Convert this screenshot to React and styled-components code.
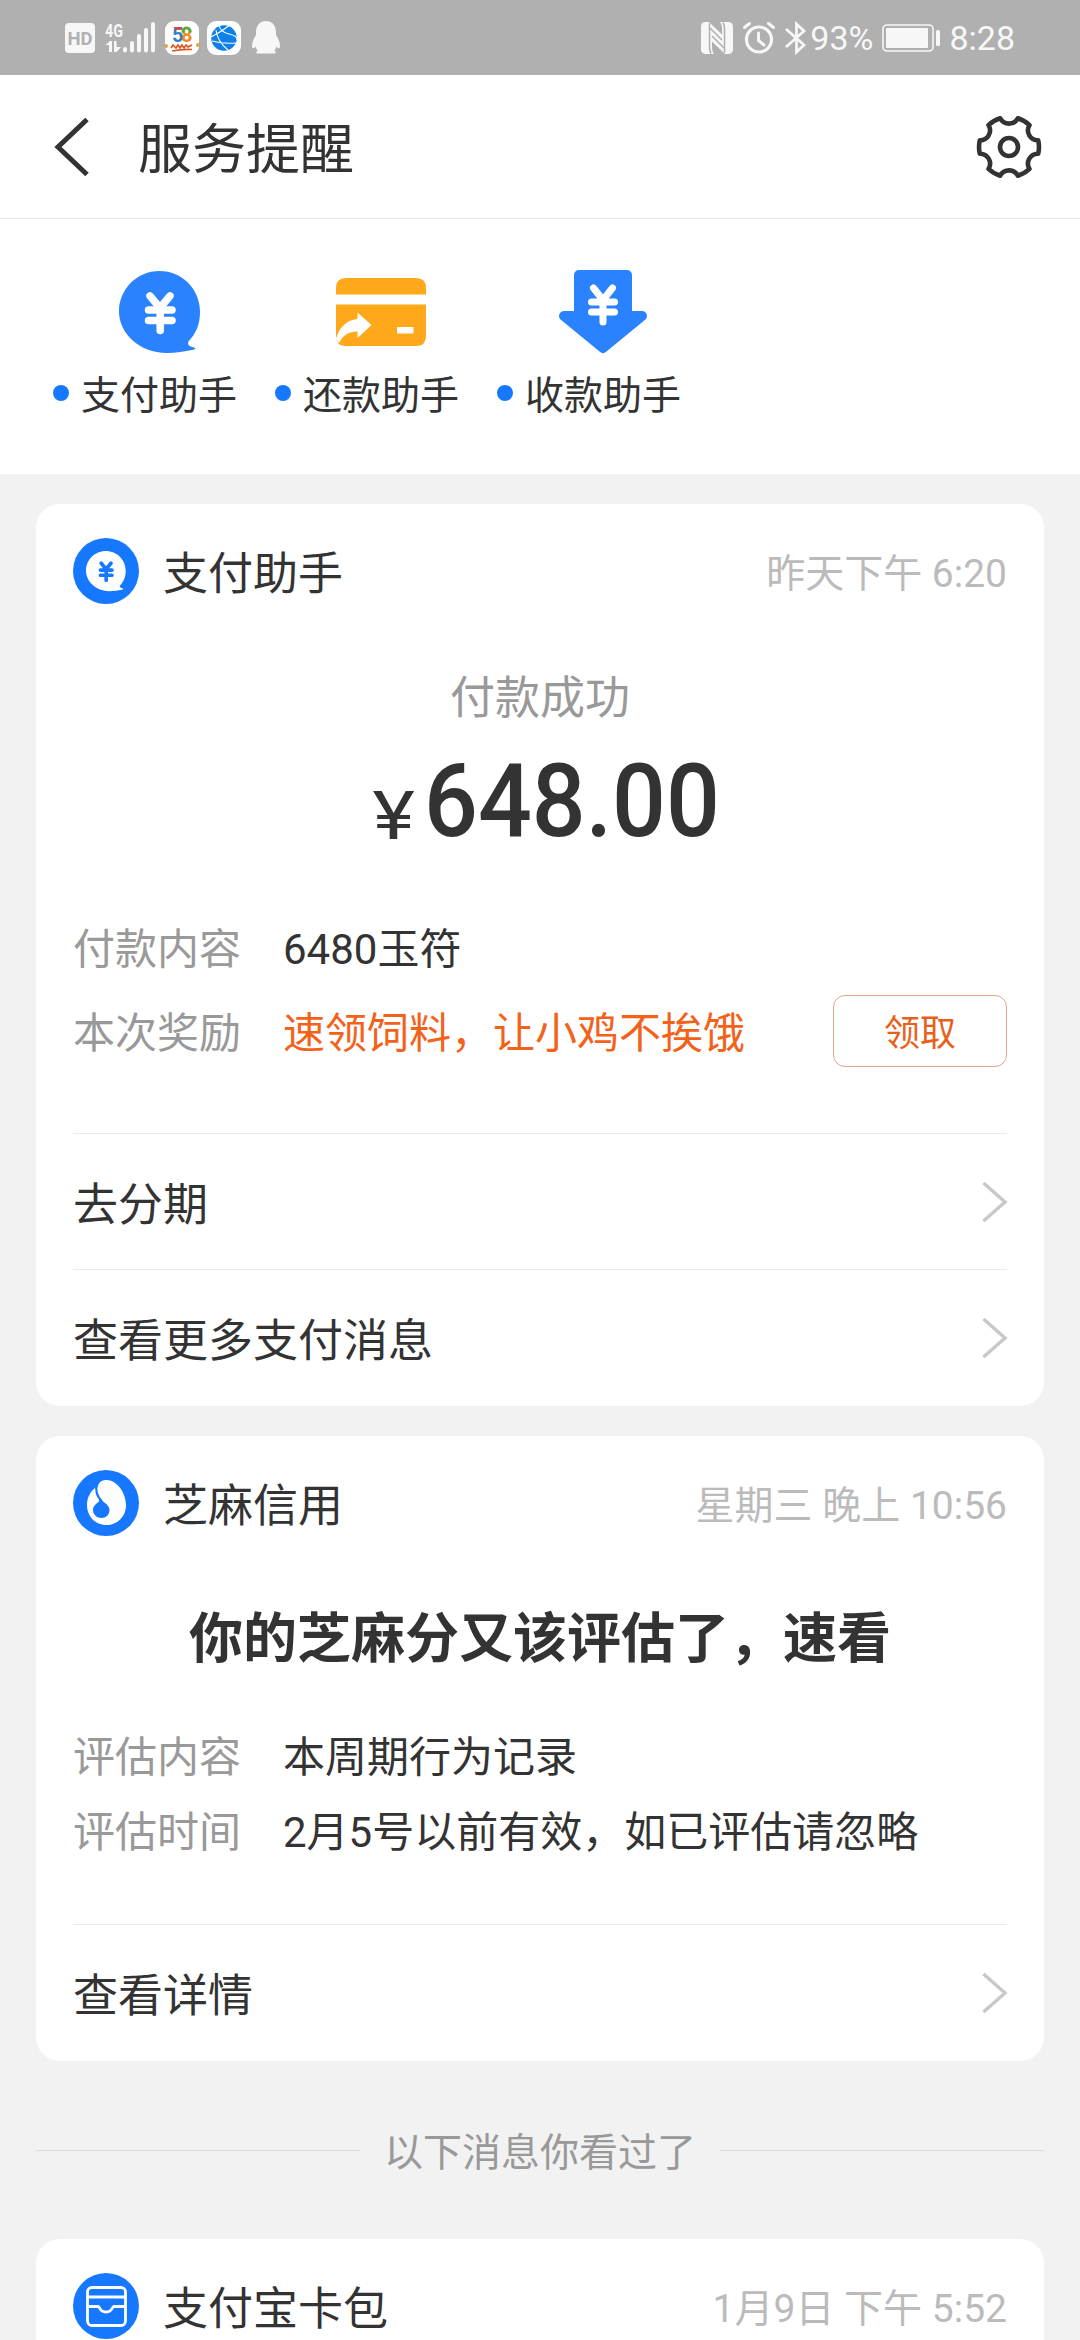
import React from 'react';
import styled, { createGlobalStyle } from 'styled-components';

const GlobalStyle = createGlobalStyle`
    * {
        box-sizing: border-box;
    }

    body {
        margin: 0;
        background: #f2f2f2;
        color: #333333;
        font-family: Roboto, "Noto Sans CJK SC", sans-serif;
    }

    svg {
        display: block;
        flex: none;
        overflow: visible;
    }
`;

const Screen = styled.div`
    width: 1080px;
    height: 2340px;
    overflow: hidden;
    background: #f2f2f2;
`;

const StatusBar = styled.div`
    display: flex;
    justify-content: space-between;
    align-items: center;
    height: 75px;
    padding: 0 65px;
    background: #b0b0b0;
    color: #f7f7f7;
`;

const StatusGroup = styled.div`
    display: flex;
    align-items: center;
`;

const StatusText = styled.span`
    padding-top: 1px;
    font-size: 34px;
    line-height: 40px;
    margin-left: ${props => props.$left};
`;

const NavBar = styled.header`
    display: flex;
    align-items: center;
    height: 144px;
    padding: 0 37px 0 53px;
    background: #ffffff;
    border-bottom: 1px solid #e8e8e8;
`;

const NavTitle = styled.h1`
    flex: 1;
    margin: 0 0 0 47px;
    padding-top: 8px;
    font-size: 54px;
    font-weight: 400;
    line-height: 70px;
`;

const Shortcuts = styled.nav`
    display: flex;
    gap: 38px;
    height: 255px;
    padding: 50px 53px 0;
    background: #ffffff;
`;

const Shortcut = styled.div`
    display: flex;
    flex-direction: column;
    align-items: center;
    width: 184px;
`;

const ShortcutIcon = styled.div`
    display: flex;
    align-items: center;
    justify-content: center;
    width: 90px;
    height: 86px;
    margin-left: 28px;
`;

const ShortcutLabel = styled.div`
    display: flex;
    align-items: center;
    gap: 12px;
    margin-top: 13px;
    font-size: 39px;
    line-height: 56px;
    white-space: nowrap;
`;

const Dot = styled.span`
    width: 16px;
    height: 16px;
    margin-top: -7px;
    border-radius: 50%;
    background: #1677ff;
`;

const Feed = styled.main`
    padding: 30px 36px 0;
`;

const Card = styled.section`
    height: ${props => props.$height};
    margin-bottom: 30px;
    padding: 34px 37px 0;
    border-radius: 24px;
    background: #ffffff;
`;

const CardHeader = styled.div`
    display: flex;
    align-items: center;
    height: 66px;
`;

const CardTitle = styled.h2`
    flex: 1;
    margin: 0 0 0 24px;
    padding-top: 7px;
    font-size: 45px;
    font-weight: 400;
    line-height: 60px;
`;

const CardTime = styled.span`
    padding-top: 5px;
    font-size: 39px;
    line-height: 60px;
    color: #bbbbbb;
`;

const PayStatus = styled.div`
    margin-top: 62px;
    font-size: 45px;
    line-height: 66px;
    text-align: center;
    color: #999999;
`;

const Amount = styled.div`
    display: flex;
    align-items: baseline;
    justify-content: center;
    gap: 13px;
    height: 120px;
    margin-top: 9px;
    line-height: 120px;
    padding-left: 14px;
`;

const Currency = styled.span`
    font-size: 67px;
    line-height: 126px;
    transform: translateY(3px) scaleX(1.2);
`;

const Digits = styled.span`
    width: 294px;
    font-size: 102px;
    font-weight: 500;
    transform: scaleX(0.93);
    transform-origin: left;
    white-space: nowrap;
`;

const Headline = styled.h3`
    margin: 64px 0 0;
    font-size: 54px;
    font-weight: 700;
    line-height: 80px;
    text-align: center;
`;

const Details = styled.dl`
    margin: ${props => props.$top} 0 0;
    height: ${props => props.$height};
`;

const DetailRow = styled.div`
    display: flex;
    align-items: center;
    height: ${props => props.$height};
    font-size: 42px;
    line-height: 60px;
`;

const DetailLabel = styled.dt`
    width: 210px;
    padding-top: 5px;
    color: #999999;
`;

const DetailValue = styled.dd`
    flex: 1;
    margin: 0;
    padding-top: 5px;
    white-space: nowrap;
    color: ${props => (props.$highlight ? '#f3621b' : '#333333')};
`;

const ClaimButton = styled.button`
    width: 174px;
    height: 72px;
    padding: 5px 0 0;
    border: 1px solid #dda98c;
    border-radius: 12px;
    background: #ffffff;
    color: #e8601c;
    font-family: inherit;
    font-size: 36px;
    line-height: 64px;
`;

const LinkRow = styled.div`
    display: flex;
    align-items: center;
    justify-content: space-between;
    height: 136px;
    border-top: 1px solid #ebebeb;
    font-size: 45px;
`;

const SeenDivider = styled.div`
    display: flex;
    align-items: center;
    justify-content: space-between;
    height: 60px;
    margin: 59px 0;
    font-size: 39px;
    line-height: 60px;
    color: #999999;

    &::before,
    &::after {
        content: '';
        width: 324px;
        height: 1px;
        background: #dcdcdc;
    }
`;

const SeenText = styled.span`
    padding-top: 6px;
`;

const HdIcon = () => (
    <svg width="30" height="30" viewBox="0 0 30 30">
        <rect width="30" height="30" rx="4" fill="#f7f7f7" />
        <text x="15" y="21.5" textAnchor="middle" fontFamily="Roboto" fontSize="18.5" fontWeight="700" fill="#b0b0b0">HD</text>
    </svg>
);

const StatusSvg = styled.svg`
    margin-left: ${props => props.$left};
`;

const SignalIcon = () => (
    <StatusSvg $left="10px" width="52" height="34" viewBox="0 0 52 34" fill="#f7f7f7">
        <text x="0" y="15.5" fontFamily="Roboto" fontSize="18" fontWeight="700" textLength="18" lengthAdjust="spacingAndGlyphs">4G</text>
        <path d="M0.5 24 L5 20 H7 V31 H4 V24 Z M9 20 H11.5 V26 L16 26 L11.5 31 H9 Z" />
        <rect x="18" y="26" width="4" height="5.5" rx="2" />
        <rect x="25" y="20" width="4" height="11.5" rx="2" />
        <rect x="32" y="13" width="4" height="18.5" rx="2" />
        <rect x="39" y="7" width="4" height="24.5" rx="2" />
        <rect x="46" y="1" width="4" height="30.5" rx="2" />
    </StatusSvg>
);

const CityIcon = () => (
    <StatusSvg $left="7px" width="36" height="34" viewBox="0 0 36 34">
        <rect x="1" width="34" height="34" rx="9" fill="#ffffff" />
        <g fontFamily="Roboto" fontSize="20" fontWeight="700">
            <text x="8" y="20.5" fill="#2d7fd3">5</text>
            <text x="17" y="20.5" fill="#ef8b1f">8</text>
        </g>
        <path d="M10.500 7.500 H18" stroke="#e04238" strokeWidth="2.600" fill="none" />
        <path d="M19.200 11.500 A3.600 3.600 0 1 1 26 11.500" stroke="#4caf3d" strokeWidth="2.600" fill="none" />
        <circle cx="2" cy="25" r="2" fill="#e3a53c" />
        <circle cx="34" cy="24" r="2" fill="#e3a53c" />
        <path d="M7 27 L9 24 L12 27 L14 24 L16 27 L18 24 L20 27 L22 24 L24 26 L28 24 M8 30 Q18 28 28 28.500" stroke="#e2541f" strokeWidth="1.600" fill="none" />
    </StatusSvg>
);

const BrowserIcon = () => (
    <StatusSvg $left="7px" width="34" height="34" viewBox="0 0 34 34">
        <rect width="34" height="34" rx="9" fill="#ffffff" />
        <circle cx="17" cy="17" r="12.800" fill="#0f80e8" />
        <path d="M12 4 Q13 11 22 13 T30 19 M4 16 Q14 11 23 4 M9 9 Q10 20 21 29 M5 20 Q16 23 29 22" stroke="#ffffff" strokeWidth="1.100" fill="none" />
    </StatusSvg>
);

const PenguinIcon = () => (
    <StatusSvg $left="11px" width="28" height="33" viewBox="0 0 28 33">
        <path
            d="M14 0 C20 0 24 4.500 24 11 L24 14 C26 17 28 21 28 25 C28 28 26 28 24.500 25.500 C24 28 23 29 22 30 C25 31 24 32.500 22 32.500 H6 C4 32.500 3 31 6 30 C5 29 4 28 3.500 25.500 C2 28 0 28 0 25 C0 21 2 17 4 14 L4 11 C4 4.500 8 0 14 0 Z"
            fill="#f7f7f7"
        />
    </StatusSvg>
);

const NfcIcon = () => (
    <svg width="32" height="32" viewBox="0 0 32 32">
        <rect width="32" height="32" rx="4.500" fill="#f7f7f7" />
        <path d="M8 0 L21 12.500 V7 C21 3.500 20 1.500 19 0" fill="#b0b0b0" />
        <path d="M24 32 L11 19.500 V25 C11 28.500 12 30.500 13 32" fill="#b0b0b0" />
        <path d="M8.500 1 V24 C8.500 28 9 30 10 31.500 M23.500 31 V8 C23.500 4 23 2 22 0.500 M9 6 L21 18 M11 14 L23 26" stroke="#b0b0b0" strokeWidth="1.500" fill="none" />
    </svg>
);

const AlarmIcon = () => (
    <StatusSvg $left="10px" width="32" height="32" viewBox="0 0 32 32" fill="none" stroke="#f7f7f7">
        <circle cx="16" cy="17.500" r="12.500" strokeWidth="3.200" />
        <path d="M15.500 11 V18.500 L21 23" strokeWidth="3" strokeLinecap="round" />
        <path d="M1.500 5.500 L6.500 1.500 M30.500 5.500 L25.500 1.500" strokeWidth="3" strokeLinecap="round" />
    </StatusSvg>
);

const BluetoothIcon = () => (
    <StatusSvg $left="10px" width="22" height="34" viewBox="0 0 22 34">
        <path d="M1 8 L19 24 L11.500 31 V3 L19 10 L1 26" fill="none" stroke="#f7f7f7" strokeWidth="2.800" />
    </StatusSvg>
);

const BatteryIcon = () => (
    <StatusSvg $left="9px" width="59" height="28" viewBox="0 0 59 28">
        <rect x="1" y="1" width="50" height="26" rx="4" fill="none" stroke="#f7f7f7" strokeWidth="1.600" />
        <rect x="4" y="4" width="42" height="20" rx="1" fill="#f7f7f7" />
        <rect x="54" y="6" width="4" height="16" rx="1.500" fill="#f7f7f7" />
    </StatusSvg>
);

const BackIcon = () => (
    <svg width="38" height="60" viewBox="0 0 38 60">
        <path d="M34 2.500 L5 30 L34 57.500" fill="none" stroke="#333333" strokeWidth="5" />
    </svg>
);

const GearIcon = () => (
    <svg width="68" height="68" viewBox="-34 -34 68 68" fill="none" stroke="#333333">
        <path
            strokeWidth="4.600"
            strokeLinejoin="round"
            d="M29.200 6.750 A9.900 9.900 0 0 0 20.500 21.900 A30 30 0 0 1 8.800 28.700 A9.900 9.900 0 0 0 -8.800 28.700 A30 30 0 0 1 -20.500 21.900 A9.900 9.900 0 0 0 -29.200 6.750 A30 30 0 0 1 -29.200 -6.750 A9.900 9.900 0 0 0 -20.500 -21.900 A30 30 0 0 1 -8.800 -28.700 A9.900 9.900 0 0 0 8.800 -28.700 A30 30 0 0 1 20.500 -21.900 A9.900 9.900 0 0 0 29.200 -6.750 A30 30 0 0 1 29.200 6.750 Z"
        />
        <circle r="9" strokeWidth="4.600" />
    </svg>
);

const Bubble = ({ fill, mark }) => (
    <>
        <path
            d="M40.500 0 C63 0 81 18 81 40.500 C81 54 77 62 69.500 70.500 C67.500 74 72 76 75 76.500 C77 77 76.500 78.500 73 79 C66 80.500 57 82 48 82 C20 82 0 62 0 40.500 C0 18 18 0 40.500 0 Z"
            fill={fill}
        />
        <path d="M31 25 L41 37 L51 25 M29.500 39 H53 M29.500 49.500 H53 M41.200 37 V59.500" fill="none" stroke={mark} strokeWidth="7.500" strokeLinecap="round" />
    </>
);

const PayIcon = () => (
    <svg width="81" height="82" viewBox="0 0 81 82">
        <Bubble fill="#2a82ff" mark="#ffffff" />
    </svg>
);

const RepayIcon = () => (
    <svg width="90" height="68" viewBox="0 0 90 68">
        <path d="M10 0 H80 Q90 0 90 10 V16.500 H0 V10 Q0 0 10 0 Z M0 26.500 H90 V58 Q90 68 80 68 H10 Q0 68 0 58 Z" fill="#fea81a" />
        <path d="M0 61 C3 49 11 42 21.500 41 V34.500 L35.500 47 L21.500 60 V53.500 C13 53.500 7 57 3 65 Z" fill="#ffffff" />
        <rect x="61" y="49" width="16.500" height="6.500" fill="#ffffff" />
    </svg>
);

const CollectIcon = () => (
    <svg width="90" height="84" viewBox="0 0 90 84">
        <path
            d="M21 5 H69 V46 H84 L45 78 L6 46 H21 Z"
            fill="#2a82ff"
            stroke="#2a82ff"
            strokeWidth="10"
            strokeLinejoin="round"
        />
        <path d="M35.500 18 L45 30 L54.500 18 M33.500 32 H56.500 M33.500 42 H56.500 M45 30 V52" fill="none" stroke="#ffffff" strokeWidth="7" strokeLinecap="round" />
    </svg>
);

const PayAvatar = () => (
    <svg width="66" height="66" viewBox="0 0 66 66">
        <circle cx="33" cy="33" r="33" fill="#1677ff" />
        <g transform="translate(13 13) scale(0.490)">
            <Bubble fill="#ffffff" mark="#1677ff" />
        </g>
    </svg>
);

const SesameAvatar = () => (
    <svg width="66" height="66" viewBox="0 0 66 66">
        <circle cx="33" cy="33" r="33" fill="#1677ff" />
        <path d="M33.500 10 C44 10 53 23 53 35 C53 47 44 55 33.500 55 C22 55 14 46 14 35 C14 28 17 22 22 18 L25 16 C26 12 29 10 33.500 10 Z" fill="#ffffff" />
        <path d="M24 14 C22 21 23.500 26 29 31.500" fill="none" stroke="#1677ff" strokeWidth="2.200" />
        <path d="M26 28 C28 31 36.500 34 36.500 40 C36.500 44.500 33 48 28.500 48 C24 48 20 44.500 20 40 C20 36 23 34 26 31.500 Z" fill="#1677ff" />
    </svg>
);

const WalletAvatar = () => (
    <svg width="66" height="66" viewBox="0 0 66 66">
        <circle cx="33" cy="33" r="33" fill="#1677ff" />
        <g fill="none" stroke="#ffffff" strokeWidth="2.800">
            <rect x="14.500" y="14.500" width="38" height="38" rx="4.500" />
            <path d="M14.500 24 H52.500 M14.500 33.500 H25 C27 33.500 26.500 39 33 39 C39.500 39 39 33.500 41 33.500 H52.500" />
        </g>
    </svg>
);

const Chevron = () => (
    <svg width="26" height="40" viewBox="0 0 26 40">
        <path d="M2.500 1 L24 20 L2.500 39" fill="none" stroke="#c8c8c8" strokeWidth="3.400" />
    </svg>
);

const shortcuts = [
    { label: '支付助手', icon: <PayIcon /> },
    { label: '还款助手', icon: <RepayIcon /> },
    { label: '收款助手', icon: <CollectIcon /> }
];

const MessageCard = ({ icon, title, time, height, children }) => (
    <Card $height={height}>
        <CardHeader>
            {icon}
            <CardTitle>{title}</CardTitle>
            <CardTime>{time}</CardTime>
        </CardHeader>
        {children}
    </Card>
);

const App = () => {
    return (
        <Screen>
            <GlobalStyle />
            <StatusBar>
                <StatusGroup>
                    <HdIcon />
                    <SignalIcon />
                    <CityIcon />
                    <BrowserIcon />
                    <PenguinIcon />
                </StatusGroup>
                <StatusGroup>
                    <NfcIcon />
                    <AlarmIcon />
                    <BluetoothIcon />
                    <StatusText $left="3px">93%</StatusText>
                    <BatteryIcon />
                    <StatusText $left="8px">8:28</StatusText>
                </StatusGroup>
            </StatusBar>
            <NavBar>
                <BackIcon />
                <NavTitle>服务提醒</NavTitle>
                <GearIcon />
            </NavBar>
            <Shortcuts>
                {shortcuts.map(item => (
                    <Shortcut key={item.label}>
                        <ShortcutIcon>{item.icon}</ShortcutIcon>
                        <ShortcutLabel>
                            <Dot />
                            {item.label}
                        </ShortcutLabel>
                    </Shortcut>
                ))}
            </Shortcuts>
            <Feed>
                <MessageCard icon={<PayAvatar />} title="支付助手" time="昨天下午 6:20" height="902px">
                    <PayStatus>付款成功</PayStatus>
                    <Amount>
                        <Currency>¥</Currency>
                        <Digits>648.00</Digits>
                    </Amount>
                    <Details $top="44px" $height="228px">
                        <DetailRow $height="84px">
                            <DetailLabel>付款内容</DetailLabel>
                            <DetailValue>6480玉符</DetailValue>
                        </DetailRow>
                        <DetailRow $height="84px">
                            <DetailLabel>本次奖励</DetailLabel>
                            <DetailValue $highlight>速领饲料，让小鸡不挨饿</DetailValue>
                            <ClaimButton>领取</ClaimButton>
                        </DetailRow>
                    </Details>
                    <LinkRow>
                        去分期
                        <Chevron />
                    </LinkRow>
                    <LinkRow>
                        查看更多支付消息
                        <Chevron />
                    </LinkRow>
                </MessageCard>
                <MessageCard icon={<SesameAvatar />} title="芝麻信用" time="星期三 晚上 10:56" height="625px">
                    <Headline>你的芝麻分又该评估了，速看</Headline>
                    <Details $top="38px" $height="206px">
                        <DetailRow $height="75px">
                            <DetailLabel>评估内容</DetailLabel>
                            <DetailValue>本周期行为记录</DetailValue>
                        </DetailRow>
                        <DetailRow $height="75px">
                            <DetailLabel>评估时间</DetailLabel>
                            <DetailValue>2月5号以前有效，如已评估请忽略</DetailValue>
                        </DetailRow>
                    </Details>
                    <LinkRow>
                        查看详情
                        <Chevron />
                    </LinkRow>
                </MessageCard>
                <SeenDivider>
                    <SeenText>以下消息你看过了</SeenText>
                </SeenDivider>
                <MessageCard icon={<WalletAvatar />} title="支付宝卡包" time="1月9日 下午 5:52" height="400px" />
            </Feed>
        </Screen>
    );
};

export default App;
